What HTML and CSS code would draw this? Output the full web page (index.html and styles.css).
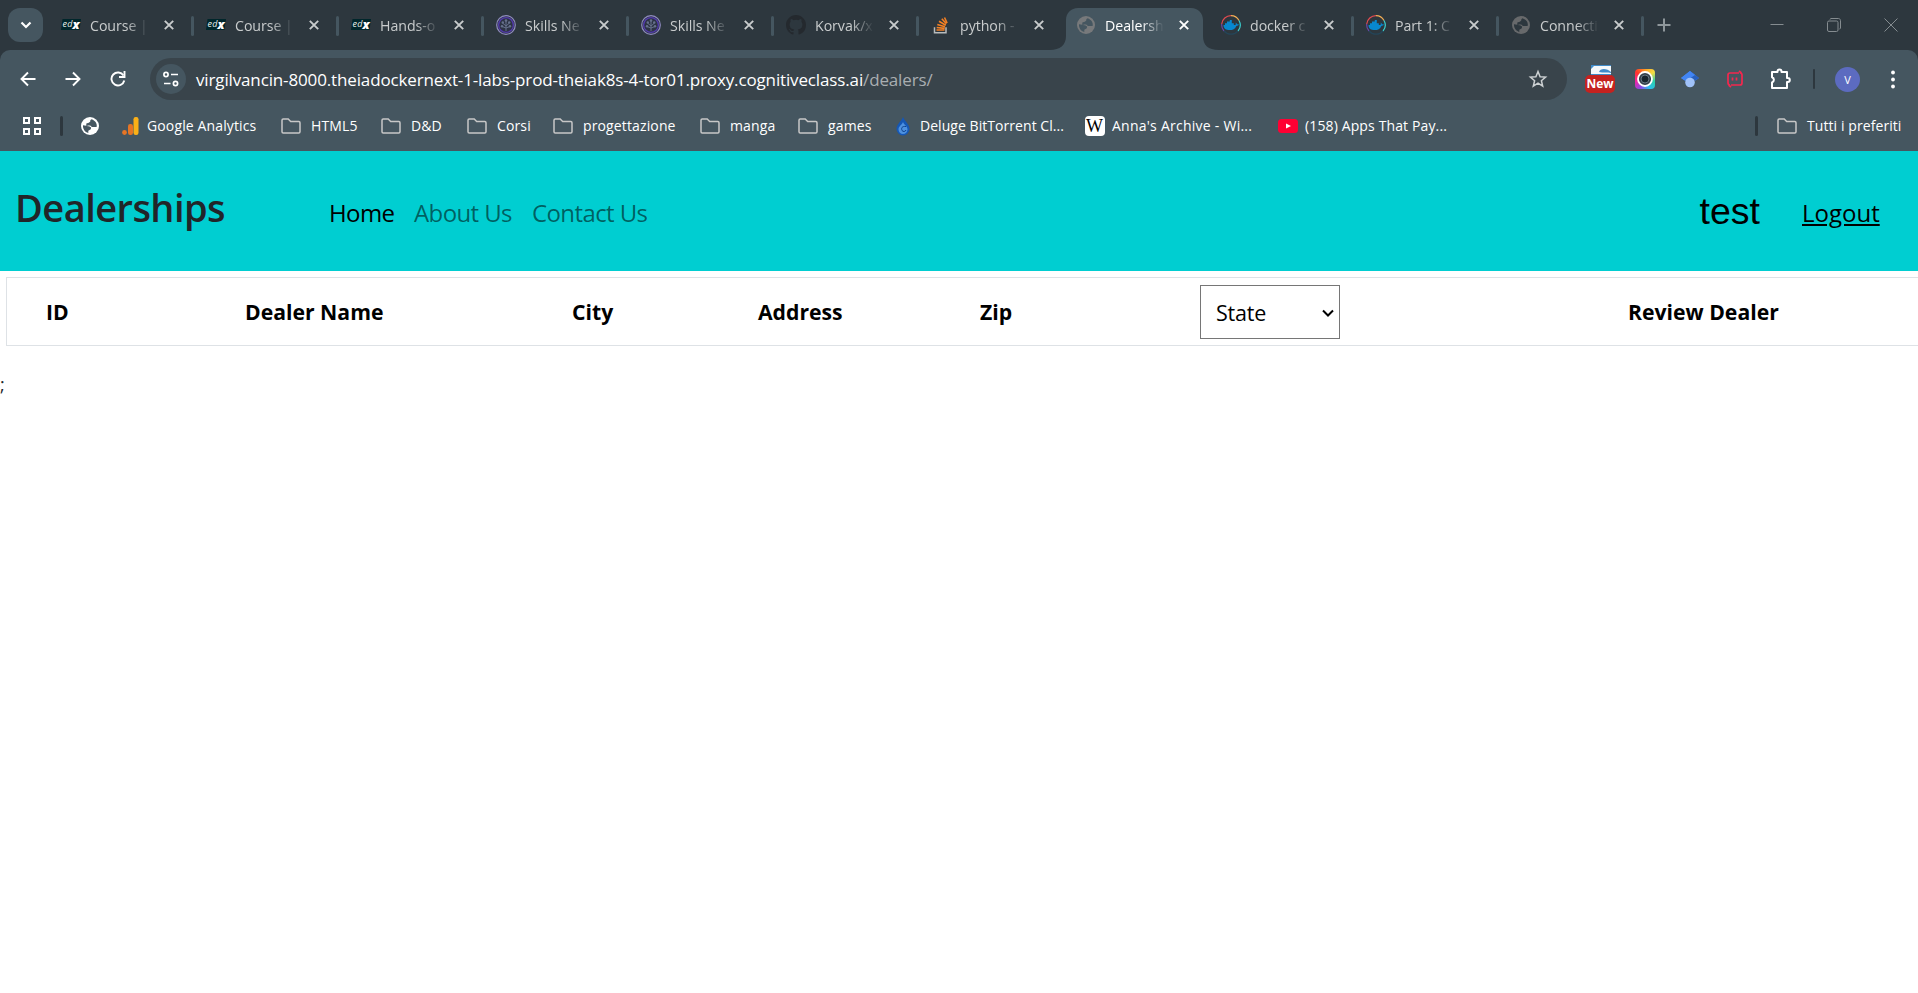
FILE: index.html
```html
<!DOCTYPE html>
<html lang="it">
<head>
<meta charset="utf-8">
<title>Dealerships</title>
<link rel="stylesheet" href="styles.css">
</head>
<body>
<svg width="0" height="0" class="defs">
  <defs>
    <symbol id="edx" viewBox="0 0 20 14"><path d="M1.500 1H20l-1.500 11H0z" fill="#00262b"/><text x="1.500" y="8.500" font-family="Open Sans, sans-serif" font-style="italic" font-size="9" font-weight="400" fill="#e8eeee" textLength="10">ed</text><text x="11.500" y="10.500" font-family="Open Sans, sans-serif" font-style="italic" font-weight="800" font-size="11.500" fill="#fff" textLength="7" lengthAdjust="spacingAndGlyphs">x</text></symbol>
    <symbol id="skills" viewBox="0 0 20 20"><circle cx="10" cy="10" r="9.300" fill="none" stroke="#8f8ac0" stroke-width="1.200"/><circle cx="10" cy="10" r="7.400" fill="#2d3345" stroke="#543bb0" stroke-width="1.300"/><path d="M10 5v11M6.500 8l3.500 3 3.500-3M6 11.500L10 13l4-1.500" fill="none" stroke="#66718c" stroke-width="1"/><g fill="#66718c"><circle cx="10" cy="5.500" r="1.300"/><circle cx="6.800" cy="7.500" r="1.200"/><circle cx="13.200" cy="7.500" r="1.200"/><circle cx="6" cy="11.300" r="1.200"/><circle cx="14" cy="11.300" r="1.200"/></g></symbol>
    <symbol id="github" viewBox="0 0 16 16"><path fill="#24292e" d="M8 0C3.580 0 0 3.580 0 8c0 3.540 2.290 6.530 5.470 7.590.4.070.55-.17.55-.38 0-.19-.01-.82-.01-1.490-2.010.37-2.530-.49-2.690-.94-.09-.23-.48-.94-.82-1.130-.28-.15-.68-.52-.01-.53.63-.01 1.080.58 1.230.82.72 1.210 1.870.87 2.330.66.070-.52.280-.87.510-1.070-1.780-.2-3.640-.89-3.640-3.950 0-.87.310-1.590.82-2.150-.08-.2-.36-1.020.08-2.120 0 0 .67-.21 2.200.82a7.600 7.600 0 0 1 4 0c1.530-1.040 2.200-.82 2.200-.82.44 1.100.16 1.920.08 2.120.51.56.82 1.270.82 2.150 0 3.070-1.870 3.750-3.650 3.950.29.25.54.73.54 1.480 0 1.070-.01 1.930-.01 2.200 0 .21.15.46.55.38A8 8 0 0 0 16 8c0-4.420-3.580-8-8-8z"/></symbol>
    <symbol id="stack" viewBox="0 0 20 20"><path d="M4 12v5.500h11.500V12" transform="translate(-.500 .300)" fill="none" stroke="#b8bbbc" stroke-width="1.500"/><path d="M5.500 15h8M5.700 12.500l8 .9M6.300 9.500l7.700 2.300M8 6.300l6.800 4M10.800 3.800l4.600 5M13.500 2.500l2.600 5.500" fill="none" stroke="#f48024" stroke-width="1.600"/></symbol>
    <symbol id="globe" viewBox="0 0 18 18"><circle cx="9" cy="9" r="9" fill="currentColor"/><path fill="var(--hole)" d="M10.500 2.200c-1 .5-1.500 1.300-1.200 2.300L7.800 5.800 5.300 6.500v2.300l-3.300-.6C1.700 12 4 15 7.300 16v-2.200l2.500-1.500.3-1.700-2-1.300H6.500V8.500h2.700l1.700 1.600h4.700c.9-3-1-6.500-5.100-7.900z"/></symbol>
    <symbol id="docker" viewBox="0 0 20 20"><g fill="none" stroke-width="1.200"><path d="M3 16A9.300 9.300 0 0 1 .7 9" stroke="#6947a5"/><path d="M.7 9A9.300 9.300 0 0 1 10 .7" stroke="#e34b50"/><path d="M10 .7a9.300 9.300 0 0 1 8 4.800" stroke="#f5ae55"/><path d="M18 5.500a9.300 9.300 0 0 1-1 10.500" stroke="#3bd0cf"/><path d="M17 16a9.300 9.300 0 0 1-14 0" stroke="#244558"/></g><path fill="#0788d0" d="M2.500 10H4V8.300h2V6.600h2.800V5h2v3.300h2V10h1.700c.5-1 .3-1.900 0-2.500.9.400 1.400 1.100 1.500 1.700.8-.1 1.400 0 1.900.4-.5 1-1.500 1.300-2.500 1.300-1.300 3-3.600 4.200-6.700 4.200-3.600 0-6.200-1.500-6.200-5.100z"/></symbol>
    <symbol id="folder" viewBox="0 0 20 16"><path d="M1 2.200C1 1.500 1.500 1 2.200 1h5l2.500 2.500h8.100c.7 0 1.200.5 1.200 1.200v9.100c0 .7-.5 1.200-1.200 1.200H2.200C1.500 15 1 14.500 1 13.800z" fill="none" stroke="#c7c7c7" stroke-width="1.500"/></symbol>
    <symbol id="close" viewBox="0 0 10 10"><path d="M.8.8l8.400 8.400M9.200.8L.8 9.200" stroke="currentColor" stroke-width="1.900"/></symbol>
  </defs>
</svg>

<div class="tabstrip">
  <button class="tab-search"><svg width="12" height="8" viewBox="0 0 12 8"><path d="M1.500 1.500L6 6l4.500-4.500" fill="none" stroke="#fff" stroke-width="2.200"/></svg></button>
  <div class="tabs">
    <div class="tab"><svg class="fav edx"><use href="#edx"/></svg><span class="label">Course |</span><svg class="x"><use href="#close"/></svg></div>
    <div class="tab"><svg class="fav edx"><use href="#edx"/></svg><span class="label">Course |</span><svg class="x"><use href="#close"/></svg></div>
    <div class="tab"><svg class="fav edx"><use href="#edx"/></svg><span class="label">Hands-o</span><svg class="x"><use href="#close"/></svg></div>
    <div class="tab"><svg class="fav"><use href="#skills"/></svg><span class="label">Skills Ne</span><svg class="x"><use href="#close"/></svg></div>
    <div class="tab"><svg class="fav"><use href="#skills"/></svg><span class="label">Skills Ne</span><svg class="x"><use href="#close"/></svg></div>
    <div class="tab"><svg class="fav"><use href="#github"/></svg><span class="label">Korvak/x</span><svg class="x"><use href="#close"/></svg></div>
    <div class="tab bare"><svg class="fav"><use href="#stack"/></svg><span class="label">python -</span><svg class="x"><use href="#close"/></svg></div>
    <div class="tab active bare"><svg class="feet" width="169" height="42" viewBox="0 0 169 42"><path d="M0 42c10 0 16-5 16-14V12C16 5 21 0 28 0h113c7 0 12 5 12 12v16c0 9 5 14 16 14z" fill="#455660"/></svg><svg class="fav globe"><use href="#globe"/></svg><span class="label">Dealersh</span><svg class="x"><use href="#close"/></svg></div>
    <div class="tab"><svg class="fav"><use href="#docker"/></svg><span class="label">docker c</span><svg class="x"><use href="#close"/></svg></div>
    <div class="tab"><svg class="fav"><use href="#docker"/></svg><span class="label">Part 1: C</span><svg class="x"><use href="#close"/></svg></div>
    <div class="tab"><svg class="fav globe"><use href="#globe"/></svg><span class="label">Connecti</span><svg class="x"><use href="#close"/></svg></div>
  </div>
  <svg class="new-tab" width="14" height="14"><path d="M7 .5v13M.5 7h13" stroke="#8f979b" stroke-width="2"/></svg>
  <div class="window-buttons">
    <svg width="14" height="14"><path d="M.5 6.500h13" stroke="#858c90"/></svg>
    <svg width="14" height="14" fill="none" stroke="#858c90"><rect x=".5" y="3" width="10.500" height="10.500" rx="1.500"/><path d="M3 1.500c0-.5.5-1 1-1h7.500c1 0 2 1 2 2V10c0 .6-.5 1-1 1"/></svg>
    <svg width="14" height="14"><path d="M.5.500l13 13M13.500.500l-13 13" stroke="#858c90"/></svg>
  </div>
</div>

<div class="chrome-back">
<div class="chrome">
  <div class="toolbar">
    <svg class="nav" width="16" height="16"><path d="M15.500 8H2M8 1.500L1.500 8 8 14.500" fill="none" stroke="#fff" stroke-width="1.900"/></svg>
    <svg class="nav" width="16" height="16"><path d="M.5 8H14M8 1.500L14.500 8 8 14.500" fill="none" stroke="#fff" stroke-width="1.900"/></svg>
    <svg class="nav" width="16" height="16"><path d="M13.500 4.500A6.500 6.500 0 1 0 14.300 9.500" fill="none" stroke="#fff" stroke-width="1.900"/><path d="M14.500 0v6H9" fill="none" stroke="#fff" stroke-width="1.900"/></svg>
    <div class="omnibox">
      <span class="site-info"><svg width="16" height="16" fill="none" stroke="#fff" stroke-width="1.700"><circle cx="3" cy="3.500" r="2.100"/><path d="M8 3.500h7M1 12.500h6.500"/><circle cx="12.500" cy="12.500" r="2.100"/></svg></span>
      <span class="url">virgilvancin-8000.theiadockernext-1-labs-prod-theiak8s-4-tor01.proxy.cognitiveclass.ai<i>/dealers/</i></span>
      <svg class="star" width="20" height="20"><path d="M10 2.500l2.100 5.200 5.500.4-4.200 3.600 1.300 5.400L10 14.200l-4.700 2.900 1.300-5.400-4.200-3.600 5.500-.4z" fill="none" stroke="#ccd0d2" stroke-width="1.500"/></svg>
    </div>
    <div class="extensions">
      <div class="ext-new"><svg width="20" height="11"><path fill="#f4f8fb" d="M0 0h20v11H0z"/><path fill="#408bc9" d="M0 0h20v1H3L0 4zM20 8c-3-1-8 0-12-1 1-4 8-4 12 0zM0 9h20v2H0z"/></svg><b>New</b></div>
      <div class="ext-camera"><svg width="20" height="20"><circle cx="10" cy="10" r="7" fill="#333f4a" stroke="#fff" stroke-width="1.800"/><circle cx="10" cy="10" r="4" fill="#17242d" stroke="#657583"/></svg></div>
      <svg class="ext-scholar" width="18" height="18"><path fill="#4285f4" d="M9 1l9 7-3.500 2.500L9 8l-5.500 2.500L0 8z"/><path fill="#2860bd" d="M9 1l9 7-3.500 2.500L9 8z"/><path fill="#4285f4" d="M9 1l5 4-9 6-5-3z"/><circle cx="9" cy="12.500" r="4.800" fill="#a0c2f9"/></svg>
      <svg class="ext-red" width="16" height="18" fill="none" stroke="#f5274e" stroke-width="1.700"><path d="M15 5v8q0 2-2 2H4M1 13V5q0-2 2-2h9M12 1l2.500 2M4 17l-2.500-2M1 12.500q0 2.500 2 2.500M15 5q0-2-2-2M5.500 7.500v3M9.500 7.500v3"/></svg>
      <svg class="ext-puzzle" width="22" height="22"><path d="M2 4h5.500V3.500a2 2 0 0 1 4 0V4H17v6h.8a2 2 0 0 1 0 4H17v6H2v-5.500a2.800 2.800 0 0 0 0-5.300z" fill="none" stroke="#fff" stroke-width="2" stroke-linejoin="round"/></svg>
    </div>
    <span class="divider"></span>
    <span class="avatar">V</span>
    <svg class="menu" width="4" height="19" fill="#fff"><circle cx="2" cy="2.500" r="1.900"/><circle cx="2" cy="9.500" r="1.900"/><circle cx="2" cy="16.500" r="1.900"/></svg>
  </div>

  <div class="bookmarks">
    <svg class="apps" width="18" height="18" fill="none" stroke="#fff" stroke-width="2"><path d="M1 1h5v5H1zM12 1h5v5h-5zM1 12h5v5H1zM12 12h5v5h-5z"/></svg>
    <span class="divider"></span>
    <svg class="site"><use href="#globe"/></svg>
    <span class="bm analytics"><svg width="17" height="18"><rect x="11.500" y="0" width="5" height="18" rx="2.200" fill="#fbb017"/><rect x="6" y="7" width="5" height="11" rx="2.200" fill="#e67525"/><circle cx="2.500" cy="15.500" r="2.400" fill="#e67525"/></svg><span>Google Analytics</span></span>
    <span class="bm html"><svg class="folder"><use href="#folder"/></svg><span>HTML5</span></span>
    <span class="bm dnd"><svg class="folder"><use href="#folder"/></svg><span>D&amp;D</span></span>
    <span class="bm corsi"><svg class="folder"><use href="#folder"/></svg><span>Corsi</span></span>
    <span class="bm prog"><svg class="folder"><use href="#folder"/></svg><span>progettazione</span></span>
    <span class="bm manga"><svg class="folder"><use href="#folder"/></svg><span>manga</span></span>
    <span class="bm games"><svg class="folder"><use href="#folder"/></svg><span>games</span></span>
    <span class="bm deluge"><svg width="14" height="19"><path d="M7 0c1.500 4 6.500 7.500 6.500 12a6.500 6.500 0 0 1-13 0C.5 7.500 5.500 4 7 0z" fill="#1557b5"/><path d="M7 5c1 3 4.500 4 4.500 7.500a4.500 4.500 0 0 1-9 0C2.500 9 6 8 7 5z" fill="#4e91df"/><path d="M10 9.500C6 9 5 11 6 13.500c1 1.500 3.500 1.300 4-.5" fill="none" stroke="#0d418d" stroke-width="1"/></svg><span>Deluge BitTorrent Cl...</span></span>
    <span class="bm anna"><span class="wiki">W</span><span>Anna's Archive - Wi...</span></span>
    <span class="bm yt"><svg width="20" height="14"><rect width="20" height="14" rx="3.500" fill="#f03"/><path d="M8 4.500l5 2.500-5 2.500z" fill="#fff"/></svg><span>(158) Apps That Pay...</span></span>
    <span class="divider last"></span>
    <span class="bm all"><svg class="folder"><use href="#folder"/></svg><span>Tutti i preferiti</span></span>
  </div>
</div>
</div>

<header class="site-header">
  <h1>Dealerships</h1>
  <nav><a class="current">Home</a><a class="about">About Us</a><a class="contact">Contact Us</a></nav>
  <span class="username">test</span>
  <a class="logout">Logout</a>
</header>

<main>
  <div class="dealers">
    <span class="th">ID</span>
    <span class="th">Dealer Name</span>
    <span class="th">City</span>
    <span class="th">Address</span>
    <span class="th">Zip</span>
    <div class="select"><span>State</span><svg width="12" height="8"><path d="M1 1.500l5 5 5-5" fill="none" stroke="#000" stroke-width="2"/></svg></div>
    <span class="th">Review Dealer</span>
  </div>
  <p class="stray">;</p>
</main>
</body>
</html>
```
FILE: styles.css
```css
* { box-sizing: border-box; }
body { margin: 0; width: 1918px; height: 993px; overflow: hidden; background: #fff; font-family: "Open Sans", sans-serif; }
svg { display: block; flex: none; }
.defs { position: absolute; }
span, a { white-space: nowrap; }

/* Tab strip */
.tabstrip { height: 50px; display: flex; background: #2d373e; }
.tab-search { width: 35px; height: 34px; margin: 8px 5px 0 8px; padding: 0; border: 0; border-radius: 12px; background: #455660; display: grid; place-items: center; flex: none; }
.tabs { display: flex; margin-top: 8px; }
.tab { position: relative; width: 145px; height: 42px; padding-left: 13px; display: flex; align-items: center; color: #c9cccd; --hole: #2d373e; flex: none; }
.tab::after { content: ""; position: absolute; right: -1px; top: 8px; width: 3px; height: 20px; border-radius: 2px; background: #455660; }
.tab.bare::after { content: none; }
.fav { width: 20px; height: 20px; margin-top: -8px; }
.fav.edx { height: 14px; }
.fav.globe { width: 18px; height: 18px; margin: -8px 1px 0; color: #67696b; }
.label { width: 60px; margin: -7px 0 0 9px; font-size: 14.2px; line-height: 26px; letter-spacing: -.05px; -webkit-mask-image: linear-gradient(90deg, #000 60%, transparent 98%); mask-image: linear-gradient(90deg, #000 60%, transparent 98%); }
.x { width: 10px; height: 10px; margin: -8px 0 0 14px; }
.active { color: #fff; --hole: #455660; z-index: 1; }
.feet { position: absolute; z-index: -1; left: -13px; top: 0; }
.active .globe { color: #77797b; }
.new-tab { margin: 18px 0 0 14px; }
.window-buttons { display: flex; gap: 43px; margin: 18px 20px 0 auto; }

/* Toolbar */
.chrome-back { background: #2d373e; }
.chrome { height: 101px; background: #455660; border-radius: 10px 10px 0 0; color: #fff; }
.toolbar { height: 57px; display: flex; align-items: center; padding: 1px 23px 0 20px; }
.nav { margin-right: 29px; flex: none; }
.omnibox { width: 1417px; height: 42px; margin-left: -5px; padding: 0 19px 0 6px; border-radius: 21px; background: #39444b; display: flex; align-items: center; flex: none; }
.site-info { width: 30px; height: 30px; border-radius: 50%; background: #455660; display: grid; place-items: center; }
.url { margin-left: 10px; font-size: 17px; letter-spacing: -.14px; }
.url i { font-style: normal; color: #a9aeb1; }
.star { margin-left: auto; }
.extensions { display: flex; align-items: center; margin-left: 18px; }
.ext-new { position: relative; width: 30px; height: 28px; padding-left: 6px; }
.ext-new b { position: absolute; left: 0; top: 10px; width: 30px; height: 18px; border-radius: 5px; background: #c5221f; font-size: 12px; line-height: 18px; text-align: center; }
.ext-camera { margin-left: 20px; border-radius: 4px; overflow: hidden; background: conic-gradient(#ff9c22, #f6dd43, #2cd0a5, #2bbff0, #8a4be6, #f523a0, #ff352c, #ff9c22); }
.ext-scholar { margin-left: 26px; }
.ext-red { margin-left: 28px; }
.ext-puzzle { margin-left: 27px; }
.divider { width: 3px; height: 20px; border-radius: 2px; background: #2d373e; flex: none; }
.toolbar .divider { width: 2px; margin-left: 21px; }
.avatar { width: 25px; height: 25px; margin-left: 20px; border-radius: 50%; background: #5c6bc0; font-size: 11px; line-height: 25px; text-align: center; }
.menu { margin-left: auto; }

/* Bookmarks */
.bookmarks { height: 38px; display: flex; align-items: center; padding: 0 15px 0 23px; --hole: #455660; }
.bookmarks .divider { margin-left: 19px; }
.site { width: 18px; height: 18px; margin-left: 18px; }
.bm { display: flex; align-items: center; gap: 10px; font-size: 14px; letter-spacing: .13px; flex: none; }
.bm > span:last-child { margin-top: -2px; }
.folder { width: 20px; height: 16px; }
.analytics { width: 159px; margin-left: 23px; gap: 8px; }
.html { width: 100px; }
.dnd { width: 86px; }
.corsi { width: 86px; }
.prog { width: 147px; }
.manga { width: 98px; }
.games { width: 98px; }
.deluge { width: 189px; letter-spacing: .05px; }
.anna { width: 193px; gap: 7px; letter-spacing: .25px; }
.yt { width: 190px; gap: 7px; }
.wiki { width: 20px; height: 20px; border-radius: 4px; background: #fff; color: #000; font: 18px/20px "Liberation Serif", serif; text-indent: 1px; }
.bookmarks .last { margin-left: auto; margin-right: 19px; }
.all { width: 126px; letter-spacing: .08px; }

/* Page header */
.site-header { height: 120px; background: #00ced1; display: flex; }
h1 { width: 314px; margin: 28px 0 0 15px; font-size: 38px; line-height: 56px; font-weight: 600; color: #212529; letter-spacing: -.55px; }
nav { display: flex; margin-top: 45px; font-size: 24px; line-height: 34px; letter-spacing: -.6px; color: rgba(0,0,0,.55); }
.current { width: 85px; color: #000; }
.about { width: 118px; }
.username { margin: 37px 42px 0 auto; font: 37.500px/46px "Liberation Sans", sans-serif; }
.logout { width: 78px; margin: 45px 38px 0 0; font-size: 24px; line-height: 34px; text-decoration: underline; }

/* Dealer table */
main { padding-top: 6px; overflow: hidden; }
.dealers { width: 1940px; height: 69px; margin-left: 6px; border: 1px solid #dee2e6; display: grid; grid-template-columns: 199px 327px 186px 222px 220px 428px 1fr; align-items: center; padding-left: 39px; }
.th { font-size: 21.200px; font-weight: 700; }
.select { width: 140px; height: 54px; border: 1px solid #767676; display: flex; align-items: center; justify-content: space-between; padding: 2px 5px 0 15px; font-size: 21.500px; letter-spacing: -.2px; }
.stray { margin: 25px 0 0; font-size: 18px; line-height: 27px; color: #212529; }
```
